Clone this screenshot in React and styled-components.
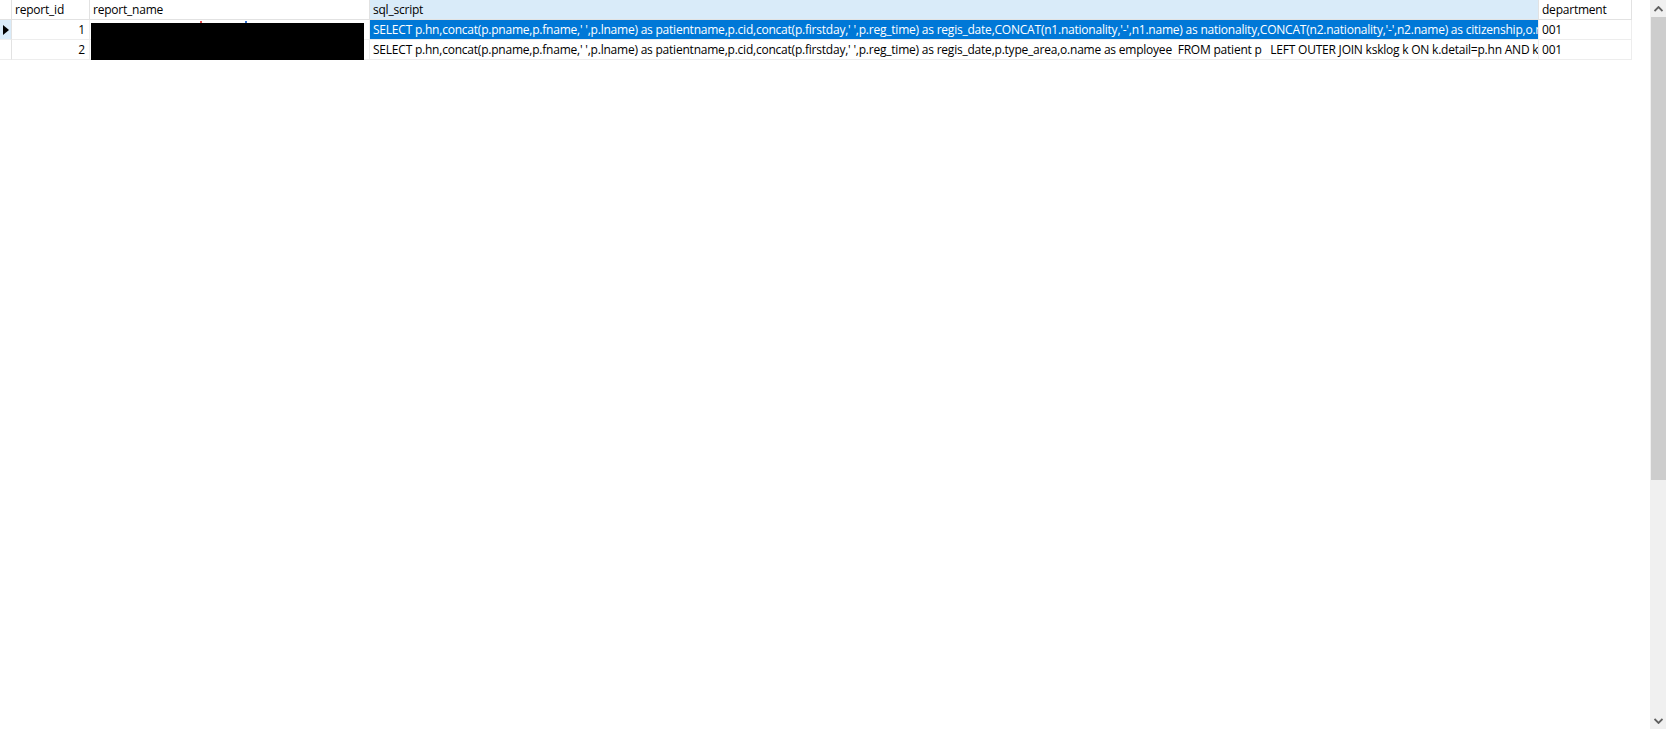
import React from "react";
import styled, { createGlobalStyle } from "styled-components";

const Global = createGlobalStyle`
  html, body { margin: 0; padding: 0; background: #ffffff; }
  body { font-family: "Open Sans", "Liberation Sans", Arial, sans-serif; font-size: 12px; color: #000; overflow: hidden; }
`;

const Page = styled.div`
  display: flex;
  width: 1666px;
  height: 729px;
  background: #fff;
`;

const GridArea = styled.div`
  flex: 1;
  overflow: hidden;
`;

const Grid = styled.div`
  display: grid;
  grid-template-columns: 12px 78px 280px 1169px 93px;
  grid-auto-rows: 20px;
  width: 1632px;
`;

const Cell = styled.div`
  box-sizing: border-box;
  border-right: 1px solid ${(p) => (p.$header ? "#e2e2e2" : "#ededed")};
  border-bottom: 1px solid ${(p) => (p.$header ? "#e2e2e2" : "#ededed")};
  background: ${(p) => (p.$selected ? "#0078d7" : p.$hl ? "#d9ebf9" : "#fff")};
  color: ${(p) => (p.$selected ? "#fff" : "#000")};
  padding: ${(p) => (p.$right ? "0 4px 0 0" : "0 0 0 3px")};
  text-align: ${(p) => (p.$right ? "right" : "left")};
  line-height: 19px;
  white-space: pre;
  overflow: ${(p) => (p.$overlay ? "visible" : "hidden")};
  position: relative;
  font-family: "Open Sans", "Liberation Sans", Arial, sans-serif;
  font-size: 12px;
  letter-spacing: -0.22px;
`;

const RowHead = styled.div`
  box-sizing: border-box;
  border-right: 1px solid #e2e2e2;
  border-bottom: 1px solid ${(p) => (p.$header ? "#e2e2e2" : "#ededed")};
  background: ${(p) => (p.$hl ? "#d9ebf9" : "#fff")};
  display: flex;
  align-items: center;
  padding-left: 3px;
`;

const Arrow = styled.span`
  width: 0;
  height: 0;
  border-top: 5px solid transparent;
  border-bottom: 5px solid transparent;
  border-left: 6px solid #000;
`;

const Redact = styled.div`
  position: absolute;
  left: 1px;
  top: 3px;
  width: 273px;
  height: 37px;
  background: #000;
  z-index: 2;
`;

const Speck = styled.span`
  position: absolute;
  top: 1px;
  width: 2px;
  height: 2px;
  background: ${(p) => p.$c};
  z-index: 3;
`;

const Scrollbar = styled.div`
  width: 16px;
  height: 729px;
  background: #f0f0f0;
  display: flex;
  flex-direction: column;
  align-items: center;
`;

const ScrollBtn = styled.div`
  width: 16px;
  height: 17px;
  display: flex;
  align-items: center;
  justify-content: center;
`;

const Thumb = styled.div`
  width: 15px;
  height: 463px;
  background: #cdcdcd;
`;

const Spacer = styled.div`
  flex: 1;
`;

const Chevron = ({ up }) => (
  <svg width="9" height="6" viewBox="0 0 9 6">
    <path
      d={up ? "M0.5 5 L4.5 1 L8.5 5" : "M0.5 1 L4.5 5 L8.5 1"}
      fill="none"
      stroke="#606060"
      strokeWidth="1.8"
    />
  </svg>
);

const sql1 =
  "SELECT p.hn,concat(p.pname,p.fname,' ',p.lname) as patientname,p.cid,concat(p.firstday,' ',p.reg_time) as regis_date,CONCAT(n1.nationality,'-',n1.name) as nationality,CONCAT(n2.nationality,'-',n2.name) as citizenship,o.name as employee FROM patient p";
const sql2 =
  "SELECT p.hn,concat(p.pname,p.fname,' ',p.lname) as patientname,p.cid,concat(p.firstday,' ',p.reg_time) as regis_date,p.type_area,o.name as employee  FROM patient p   LEFT OUTER JOIN ksklog k ON k.detail=p.hn AND k.module='patient'";

export default function App() {
  return (
    <>
      <Global />
      <Page>
        <GridArea>
          <Grid>
            <RowHead $header />
            <Cell $header>report_id</Cell>
            <Cell $header>report_name</Cell>
            <Cell $header $hl>sql_script</Cell>
            <Cell $header>department</Cell>

            <RowHead $hl>
              <Arrow />
            </RowHead>
            <Cell $right>1</Cell>
            <Cell $overlay>
              <Speck $c="#e05050" style={{ left: 110 }} />
              <Speck $c="#3070d0" style={{ left: 155 }} />
              <Redact />
            </Cell>
            <Cell $selected>{sql1}</Cell>
            <Cell>001</Cell>

            <RowHead />
            <Cell $right>2</Cell>
            <Cell />
            <Cell>{sql2}</Cell>
            <Cell>001</Cell>
          </Grid>
        </GridArea>
        <Scrollbar>
          <ScrollBtn>
            <Chevron up />
          </ScrollBtn>
          <Thumb />
          <Spacer />
          <ScrollBtn>
            <Chevron />
          </ScrollBtn>
        </Scrollbar>
      </Page>
    </>
  );
}
